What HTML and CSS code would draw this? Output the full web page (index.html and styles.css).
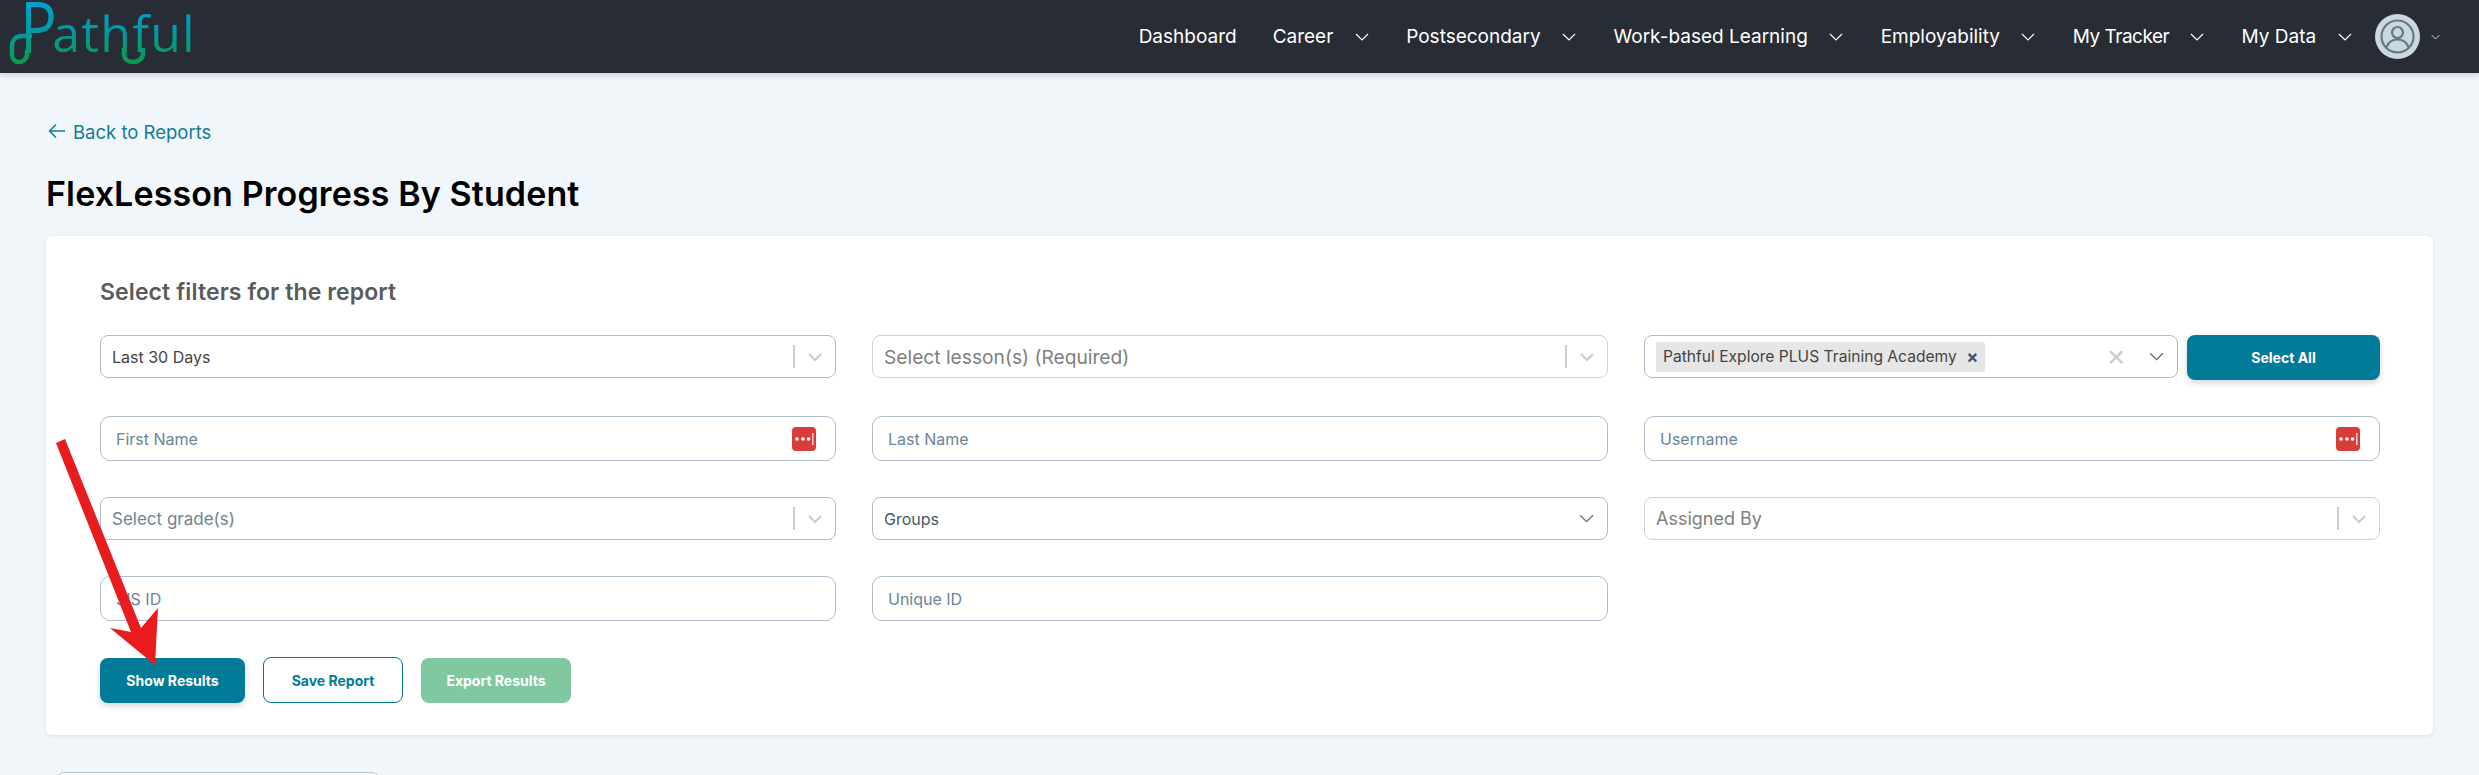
FILE: index.html
```html
<!DOCTYPE html>
<html lang="en">
<head>
  <meta charset="UTF-8">
  <meta name="viewport" content="width=device-width, initial-scale=1.0">
  <title>FlexLesson Progress By Student</title>
  <link rel="stylesheet" href="styles.css">
</head>
<body>

  <svg class="icon-defs" width="0" height="0">
    <defs>
      <symbol id="chev" viewBox="0 0 14 8"><path d="M1 1l6 6 6-6" fill="none" stroke="currentColor" stroke-width="1.2"/></symbol>
      <symbol id="chev-bold" viewBox="0 0 14 8"><path d="M1 1l6 6 6-6" fill="none" stroke="currentColor" stroke-width="2"/></symbol>
      <symbol id="lastpass" viewBox="0 0 24 24">
        <rect width="24" height="24" rx="4" fill="#d83d3a"/>
        <circle cx="5" cy="12" r="1.8" fill="#fff"/>
        <circle cx="11" cy="12" r="1.8" fill="#fff"/>
        <circle cx="16.5" cy="12" r="1.8" fill="#fff"/>
        <rect x="20" y="6" width="1.6" height="12" fill="#f4c5c4"/>
      </symbol>
    </defs>
  </svg>

  <header class="topbar">
    <div class="logo">
      <span class="logo-p">P</span><span class="logo-rest">athful</span>
      <svg class="logo-swash" width="200" height="73" viewBox="0 0 200 73">
        <defs>
          <linearGradient id="swash" gradientUnits="userSpaceOnUse" x1="0" y1="30" x2="0" y2="62">
            <stop offset="0" stop-color="#009aa6"/>
            <stop offset="1" stop-color="#0a9b4c"/>
          </linearGradient>
        </defs>
        <path d="M32 36H22C15 36 12 41 12 46v8c0 5 3 8 7 8s8-3 8-8v-4" fill="none" stroke="url(#swash)" stroke-width="4.5"/>
        <path d="M124 48v6c0 5 4 8 9 8s10-3 10-8v-6" fill="none" stroke="url(#swash)" stroke-width="4.5"/>
      </svg>
    </div>
    <nav class="nav">
      <a class="nav-item nav-plain">Dashboard</a>
      <a class="nav-item">Career <svg class="nav-chev"><use href="#chev"/></svg></a>
      <a class="nav-item">Postsecondary <svg class="nav-chev"><use href="#chev"/></svg></a>
      <a class="nav-item">Work-based Learning <svg class="nav-chev"><use href="#chev"/></svg></a>
      <a class="nav-item">Employability <svg class="nav-chev"><use href="#chev"/></svg></a>
      <a class="nav-item nav-tight">My Tracker <svg class="nav-chev"><use href="#chev"/></svg></a>
      <a class="nav-item">My Data <svg class="nav-chev"><use href="#chev"/></svg></a>
      <div class="account">
        <svg class="avatar" viewBox="0 0 45 45">
          <circle cx="22.5" cy="22.5" r="22.5" fill="#cdd8de"/>
          <circle cx="22.5" cy="22.5" r="16" fill="none" stroke="#5f7b8b" stroke-width="2.2"/>
          <circle cx="22.5" cy="18.5" r="5.5" fill="none" stroke="#5f7b8b" stroke-width="2.2"/>
          <path d="M11.5 33c2-5 6-7.500 11-7.500s9 2.500 11 7.500" fill="none" stroke="#5f7b8b" stroke-width="2.200"/>
        </svg>
        <svg class="account-chev"><use href="#chev"/></svg>
      </div>
    </nav>
  </header>

  <main class="page">
    <a class="back-link">
      <svg class="back-arrow" viewBox="0 0 18 16"><path d="M17 8H2M8 1.500L1.500 8 8 14.500" fill="none" stroke="currentColor" stroke-width="1.500"/></svg>
      Back to Reports
    </a>
    <h1 class="page-title">FlexLesson Progress By Student</h1>

    <section class="card">
      <h2 class="card-title">Select filters for the report</h2>

      <div class="filters">
        <div class="select select-blue">
          <span class="select-value">Last 30 Days</span>
          <span class="select-sep"></span>
          <svg class="select-chev"><use href="#chev-bold"/></svg>
        </div>
        <div class="select">
          <span class="placeholder-lg">Select lesson(s) (Required)</span>
          <span class="select-sep"></span>
          <svg class="select-chev"><use href="#chev-bold"/></svg>
        </div>
        <div class="select-row">
          <div class="select select-blue select-multi">
            <span class="chip">Pathful Explore PLUS Training Academy <span class="chip-x">×</span></span>
            <span class="clear-x">×</span>
            <svg class="thin-chev"><use href="#chev"/></svg>
          </div>
          <button class="btn btn-primary btn-select-all">Select All</button>
        </div>

        <div class="input">
          <span class="input-label">First Name</span>
          <svg class="lp-icon"><use href="#lastpass"/></svg>
        </div>
        <div class="input"><span class="input-label">Last Name</span></div>
        <div class="input">
          <span class="input-label">Username</span>
          <svg class="lp-icon"><use href="#lastpass"/></svg>
        </div>

        <div class="select select-blue">
          <span class="placeholder-sm">Select grade(s)</span>
          <span class="select-sep"></span>
          <svg class="select-chev"><use href="#chev-bold"/></svg>
        </div>
        <div class="select select-blue">
          <span class="select-groups">Groups</span>
          <svg class="thin-chev"><use href="#chev"/></svg>
        </div>
        <div class="select">
          <span class="placeholder-md">Assigned By</span>
          <span class="select-sep"></span>
          <svg class="select-chev"><use href="#chev-bold"/></svg>
        </div>

        <div class="input"><span class="input-label">SIS ID</span></div>
        <div class="input"><span class="input-label">Unique ID</span></div>
      </div>

      <div class="actions">
        <button class="btn btn-primary btn-show">Show Results</button>
        <button class="btn btn-outline">Save Report</button>
        <button class="btn btn-disabled">Export Results</button>
      </div>
    </section>

    <div class="below-box"></div>
  </main>

  <!-- red annotation arrow drawn over the form -->
  <svg class="annotation" width="200" height="260" viewBox="0 0 200 260">
    <polygon fill="#e81c1c" points="16,23 25,19 101,208 118,188 115,245 70,208 91,212"/>
  </svg>

</body>
</html>
```

FILE: styles.css
```css
* { box-sizing: border-box; }
html, body { height: 775px; overflow: hidden; }
body {
  margin: 0;
  background: #f1f6fb;
  font-family: Inter, "Open Sans", sans-serif;
  color: #000;
  position: relative;
}
.icon-defs { position: absolute; }

/* top bar */
.topbar {
  height: 73px;
  background: #282c35;
  box-shadow: 0 2px 6px rgba(40, 44, 53, 0.2);
  display: flex;
  justify-content: space-between;
  align-items: center;
  padding: 0 39px 0 0;
  position: relative;
}
.logo {
  position: relative;
  display: flex;
  width: 200px;
  height: 73px;
  padding-left: 20px;
  font-family: "Open Sans", sans-serif;
}
.logo-p, .logo-rest {
  display: block;
  height: 70px;
  color: transparent;
  background: linear-gradient(180deg, #00a2d6 0, #009aa6 30px, #0a9b4c 62px);
  -webkit-background-clip: text;
  background-clip: text;
  white-space: nowrap;
}
.logo-p {
  font-size: 72px;
  line-height: 50px;
  font-weight: 400;
  transform: scaleX(0.85);
  transform-origin: left top;
  margin-right: -11px;
}
.logo-rest {
  font-size: 50px;
  line-height: 67px;
  font-weight: 400;
  letter-spacing: 1.2px;
}
.logo-swash { position: absolute; left: 0; top: 0; }

.nav { display: flex; align-items: center; }
.nav-item {
  color: #fff;
  font-size: 19px;
  display: flex;
  align-items: center;
  white-space: pre;
  margin-right: 37.5px;
}
.nav-plain { margin-right: 36px; }
.nav-tight { letter-spacing: -0.5px; }
.nav-chev { width: 14px; height: 8px; margin-left: 16px; color: #fff; }
.account { display: flex; align-items: center; margin-left: -14px; }
.avatar { width: 45px; height: 45px; }
.account-chev { width: 9px; height: 6px; margin-left: 11px; color: #fff; }

/* page */
.page { padding: 0 46px; }
.back-link {
  display: flex;
  align-items: center;
  gap: 7px;
  color: #0d7d99;
  font-size: 18.5px;
  height: 24px;
  margin: 47px 0 0 2px;
}
.back-arrow { width: 18px; height: 16px; margin-bottom: 3px; }
.page-title {
  margin: 28px 0 0;
  font-size: 34px;
  line-height: 44px;
  font-weight: 600;
  letter-spacing: 0.12px;
}

.card {
  margin-top: 20px;
  height: 499px;
  background: #fff;
  border-radius: 6px;
  box-shadow: 0 1px 4px rgba(60, 80, 100, 0.12);
  padding: 40px 53px 32px 54px;
}
.card-title {
  margin: 0 0 26px;
  font-size: 23px;
  line-height: 33px;
  font-weight: 600;
  letter-spacing: 0.1px;
  color: #5b5b5b;
}

.filters {
  display: grid;
  grid-template-columns: repeat(3, 736px);
  column-gap: 36px;
  row-gap: 36px;
  align-items: start;
}

/* selects */
.select {
  height: 43px;
  border: 1.5px solid #cfd2d4;
  border-radius: 8px;
  background: #fff;
  display: flex;
  align-items: center;
  padding: 0 13px 0 11px;
}
.select-blue { border-color: #aebdc9; }
.select-value { font-size: 16px; color: #444; margin-right: auto; }
.placeholder-lg { font-size: 19.2px; color: #808080; margin-right: auto; }
.placeholder-md { font-size: 18px; color: #808080; margin-right: auto; }
.placeholder-sm { font-size: 17px; color: #6d8494; margin-right: auto; }
.select-groups { font-size: 16px; color: #46586a; margin-right: auto; }
.select-sep { width: 2px; height: 23px; background: #cccccc; margin-right: 13px; }
.select-chev { width: 14px; height: 8px; color: #cccccc; }
.thin-chev { width: 15px; height: 9px; color: #5b7283; }

.select-row { display: flex; gap: 9px; align-items: flex-start; }
.select-multi { flex: 1; padding: 0 13px 0 11px; }
.chip {
  height: 30px;
  padding: 0 7px;
  background: #e6e6e6;
  border-radius: 2px;
  display: flex;
  align-items: center;
  font-size: 15.6px;
  color: #444;
  white-space: pre;
  margin-right: auto;
}
.chip-x { font-size: 18px; font-weight: 700; color: #46586a; margin-left: 5px; }
.clear-x { font-size: 30px; line-height: 1; color: #cccccc; margin: 0 23px 4px 0; }

/* inputs */
.input {
  height: 45px;
  border: 1.5px solid #aebdc9;
  border-radius: 10px;
  background: #fff;
  display: flex;
  align-items: center;
  justify-content: space-between;
  padding: 0 19px 0 15px;
}
.input-label { font-size: 16px; color: #6d8494; }
.lp-icon { width: 24px; height: 24px; }

/* buttons */
.btn {
  height: 45px;
  border-radius: 8px;
  border: 0;
  font-family: inherit;
  font-size: 14px;
  font-weight: 700;
  color: #fff;
  padding: 0;
}
.btn-primary { background: #027b98; box-shadow: 0 3px 6px rgba(0, 0, 0, 0.16); }
.btn-select-all { width: 193px; }
.actions { display: flex; margin-top: 36px; align-items: center; }
.btn-show { width: 145px; margin-right: 18px; }
.btn-outline {
  width: 140px;
  height: 46px;
  background: #fff;
  border: 1.5px solid #027b98;
  color: #027b98;
  margin-right: 18px;
}
.btn-disabled { width: 150px; background: #80c9a0; }

.below-box {
  margin: 37px 0 0 9px;
  width: 326px;
  height: 45px;
  background: #fff;
  border: 1.5px solid #b6c3ce;
  border-radius: 10px;
}

.annotation { position: absolute; left: 40px; top: 420px; }
```
